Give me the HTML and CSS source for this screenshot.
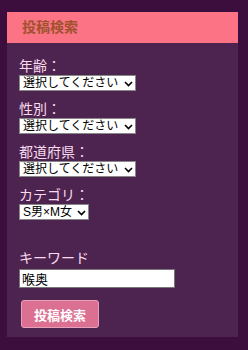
FILE: index.html
```html
<!DOCTYPE html>
<html lang="ja">
<head>
    <meta charset="UTF-8">
    <title>投稿検索</title>
    <link rel="stylesheet" href="styles.css">
</head>
<body>
    <div class="search-box">
        <h2 class="search-title">投稿検索</h2>
        <form class="search-form">
            <div class="field">
                <label>年齢：</label>
                <span class="select-wrap">
                    <select><option>選択してください</option></select>
                    <svg class="chevron" width="9" height="6" viewBox="0 0 9 6"><path d="M1 1l3.5 3.5L8 1" fill="none" stroke="#000" stroke-width="1.6"/></svg>
                </span>
            </div>
            <div class="field">
                <label>性別：</label>
                <span class="select-wrap">
                    <select><option>選択してください</option></select>
                    <svg class="chevron" width="9" height="6" viewBox="0 0 9 6"><path d="M1 1l3.5 3.5L8 1" fill="none" stroke="#000" stroke-width="1.6"/></svg>
                </span>
            </div>
            <div class="field">
                <label>都道府県：</label>
                <span class="select-wrap">
                    <select><option>選択してください</option></select>
                    <svg class="chevron" width="9" height="6" viewBox="0 0 9 6"><path d="M1 1l3.5 3.5L8 1" fill="none" stroke="#000" stroke-width="1.6"/></svg>
                </span>
            </div>
            <div class="field">
                <label>カテゴリ：</label>
                <span class="select-wrap">
                    <select><option>S男×M女</option></select>
                    <svg class="chevron" width="9" height="6" viewBox="0 0 9 6"><path d="M1 1l3.5 3.5L8 1" fill="none" stroke="#000" stroke-width="1.6"/></svg>
                </span>
            </div>
            <div class="field keyword">
                <label>キーワード</label>
                <input type="text" value="喉奥">
            </div>
            <button type="button" class="search-button">投稿検索</button>
        </form>
    </div>
</body>
</html>
```

FILE: styles.css
```css
body {
    background-color: #3c0e3e;
    margin: 0;
    padding: 12px 10px 13px 7px;
    font-family: "Liberation Sans", "Noto Sans CJK JP", sans-serif;
}
.search-box {
    background-color: #4d2450;
    padding-bottom: 9px;
}
.search-title {
    background-color: #fb7385;
    color: #a0522d;
    font-size: 14px;
    font-weight: bold;
    margin: 0;
    height: 31px;
    line-height: 31px;
    padding-left: 15px;
}
.search-form {
    padding: 14px 12px 0;
}
.field {
    display: flex;
    flex-direction: column;
    align-items: flex-start;
    margin-bottom: 9px;
}
.field label {
    color: #fadbee;
    font-size: 14px;
    line-height: 18px;
}
.select-wrap {
    position: relative;
    display: block;
}
.select-wrap select {
    appearance: none;
    -webkit-appearance: none;
    display: block;
    font-family: inherit;
    font-size: 12px;
    height: 16px;
    line-height: 14px;
    padding: 0 15px 0 3px;
    border: 1px solid #888;
    border-radius: 0;
    background: #fff;
    color: #000;
}
.chevron {
    position: absolute;
    right: 3px;
    top: 6px;
}
.keyword {
    margin-top: 29px;
    margin-bottom: 12px;
}
.keyword label {
    margin-bottom: 2px;
}
.keyword input {
    display: block;
    box-sizing: border-box;
    font-family: inherit;
    font-size: 13px;
    width: 156px;
    height: 19px;
    padding: 0 2px;
    border: 1px solid #777;
    margin: 0;
}
.search-button {
    background-color: #db7093;
    color: #fff;
    font-family: inherit;
    font-weight: bold;
    font-size: 13px;
    border: 1px solid #e8a0bc;
    border-radius: 3px;
    width: 78px;
    height: 28px;
    margin-left: 2px;
}
```
